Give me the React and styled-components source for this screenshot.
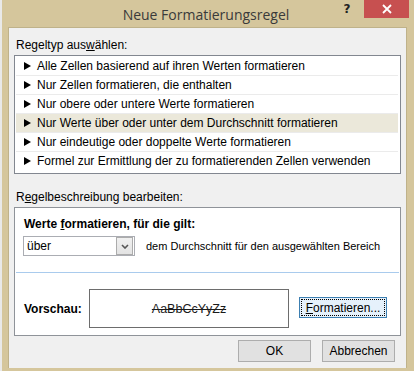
import styled, { createGlobalStyle } from "styled-components";

const GlobalStyle = createGlobalStyle`
  html, body {
    margin: 0;
    padding: 0;
    background: #e9e9e9;
  }
  body {
    font-family: "Liberation Sans", Arial, sans-serif;
    font-size: 12px;
    color: #000;
  }
`;

const Window = styled.div`
  margin-left: 2px;
  width: 412px;
  height: 371px;
  background: #d5c69c;
  display: flex;
  flex-direction: column;
  box-sizing: border-box;
`;

const TitleBar = styled.div`
  height: 27px;
  display: grid;
  grid-template-columns: 1fr auto 1fr;
  align-items: start;
`;

const Title = styled.div`
  grid-column: 2;
  padding-top: 5px;
  font-family: "Open Sans", "Noto Sans", sans-serif;
  font-size: 14px;
  color: #3a3a3a;
  margin-left: -4px;
`;

const Controls = styled.div`
  grid-column: 3;
  justify-self: end;
  display: flex;
  align-items: flex-start;
  margin-right: 5px;
`;

const HelpButton = styled.div`
  width: 26px;
  height: 18px;
  display: flex;
  align-items: center;
  justify-content: center;
  font-family: "DejaVu Sans", sans-serif;
  font-weight: bold;
  font-size: 12px;
  color: #222;
  margin-right: 4px;
`;

const CloseButton = styled.div`
  width: 45px;
  height: 18px;
  background: #c75050;
  display: flex;
  align-items: center;
  justify-content: center;
`;

const Content = styled.div`
  margin: 0 7px 3px 6px;
  flex: 1;
  background: #f0f0f0;
  border: 1px solid #bfb28a;
  border-bottom: none;
  display: flex;
  flex-direction: column;
  padding: 0 5px 0 5px;
`;

const GroupLabel = styled.div`
  padding: ${(p) => p.$top}px 0 3px 2px;
  line-height: 14px;
  color: #000;
`;

const Key = styled.span`
  text-decoration: underline;
`;

const ListBox = styled.div`
  border: 1px solid #828790;
  background: #fff;
  padding: 1px 2px 2px 1px;
  display: flex;
  flex-direction: column;
`;

const ListRow = styled.div`
  height: 18px;
  border-bottom: 1px solid ${(p) => (p.$last ? "transparent" : "#ebebeb")};
  background: ${(p) => (p.$selected ? "#ebe8da" : "#fff")};
  display: flex;
  align-items: center;
  padding-left: 8px;
  gap: 6px;
  white-space: nowrap;
`;

const DescBox = styled.div`
  border: 1px solid #8f9399;
  background: #fff;
  height: 127px;
  display: flex;
  flex-direction: column;
`;

const BoldLabel = styled.div`
  font-weight: bold;
  white-space: nowrap;
`;

const DescHead = styled.div`
  padding: 9px 0 0 9px;
  line-height: 14px;
`;

const SelectRow = styled.div`
  display: flex;
  align-items: center;
  padding: 5px 0 0 8px;
  gap: 11px;
  white-space: nowrap;
`;

const RangeText = styled.span`
  font-size: 11px;
`;

const Select = styled.div`
  width: 106px;
  height: 18px;
  border: 1px solid #abadb3;
  background: #fff;
  display: flex;
  align-items: center;
  justify-content: space-between;
  padding: 0 1px 0 3px;
  flex-shrink: 0;
`;

const DropButton = styled.div`
  width: 15px;
  height: 16px;
  border: 1px solid #acacac;
  background: linear-gradient(#f0f0f0, #e3e3e3);
  display: flex;
  align-items: center;
  justify-content: center;
`;

const Separator = styled.div`
  margin: 16px 1px 0 1px;
  height: 1px;
  background: #a9cbed;
`;

const PreviewRow = styled.div`
  display: flex;
  align-items: center;
  padding: 16px 0 0 9px;
`;

const PreviewLabel = styled(BoldLabel)`
  width: 65px;
`;

const PreviewBox = styled.div`
  width: 198px;
  height: 37px;
  border: 1px solid #6d6d6d;
  display: flex;
  align-items: center;
  justify-content: center;
  color: #1a1a1a;
  text-decoration: line-through;
  font-size: 12.5px;
`;

const Button = styled.div`
  width: ${(p) => p.$w}px;
  height: ${(p) => p.$h}px;
  box-sizing: border-box;
  border: 1px solid ${(p) => (p.$focus ? "#3c7fb1" : "#adadad")};
  background: ${(p) => (p.$focus ? "#e5f1fb" : "#e1e1e1")};
  display: flex;
  align-items: center;
  justify-content: center;
  padding: 1px;
`;

const FocusRing = styled.div`
  flex: 1;
  align-self: stretch;
  border: 1px dotted #000;
  display: flex;
  align-items: center;
  justify-content: center;
`;

const FormatButtonWrap = styled.div`
  margin-left: 10px;
  margin-top: -2px;
`;

const Footer = styled.div`
  display: flex;
  justify-content: flex-end;
  gap: 11px;
  padding: 4px 6px 0 0;
`;

const Arrow = () => (
  <svg width="7" height="8" viewBox="0 0 7 8">
    <polygon points="0,0 7,4 0,8" fill="#000" />
  </svg>
);

const Chevron = () => (
  <svg width="8" height="5" viewBox="0 0 8 5">
    <polyline points="1,1 4,4 7,1" fill="none" stroke="#555" strokeWidth="1.6" />
  </svg>
);

const CloseIcon = () => (
  <svg width="10" height="10" viewBox="0 0 10 10">
    <path d="M1 1 L9 9 M9 1 L1 9" stroke="#fff" strokeWidth="1.8" />
  </svg>
);

const rules = [
  "Alle Zellen basierend auf ihren Werten formatieren",
  "Nur Zellen formatieren, die enthalten",
  "Nur obere oder untere Werte formatieren",
  "Nur Werte über oder unter dem Durchschnitt formatieren",
  "Nur eindeutige oder doppelte Werte formatieren",
  "Formel zur Ermittlung der zu formatierenden Zellen verwenden",
];

export default function App() {
  return (
    <>
      <GlobalStyle />
      <Window>
        <TitleBar>
          <Title>Neue Formatierungsregel</Title>
          <Controls>
            <HelpButton>?</HelpButton>
            <CloseButton>
              <CloseIcon />
            </CloseButton>
          </Controls>
        </TitleBar>
        <Content>
          <GroupLabel $top={10}>
            Regeltyp aus<Key>w</Key>ählen:
          </GroupLabel>
          <ListBox>
            {rules.map((r, i) => (
              <ListRow key={r} $selected={i === 3} $last={i === rules.length - 1}>
                <Arrow />
                {r}
              </ListRow>
            ))}
          </ListBox>
          <GroupLabel $top={16}>
            R<Key>e</Key>gelbeschreibung bearbeiten:
          </GroupLabel>
          <DescBox>
            <DescHead>
              <BoldLabel>
                Werte <Key>f</Key>ormatieren, für die gilt:
              </BoldLabel>
            </DescHead>
            <SelectRow>
              <Select>
                über
                <DropButton>
                  <Chevron />
                </DropButton>
              </Select>
              <RangeText>dem Durchschnitt für den ausgewählten Bereich</RangeText>
            </SelectRow>
            <Separator />
            <PreviewRow>
              <PreviewLabel>Vorschau:</PreviewLabel>
              <PreviewBox>AaBbCcYyZz</PreviewBox>
              <FormatButtonWrap>
                <Button $w={88} $h={21} $focus>
                  <FocusRing>
                    <Key>F</Key>ormatieren...
                  </FocusRing>
                </Button>
              </FormatButtonWrap>
            </PreviewRow>
          </DescBox>
          <Footer>
            <Button $w={73} $h={22}>OK</Button>
            <Button $w={73} $h={22}>Abbrechen</Button>
          </Footer>
        </Content>
      </Window>
    </>
  );
}
